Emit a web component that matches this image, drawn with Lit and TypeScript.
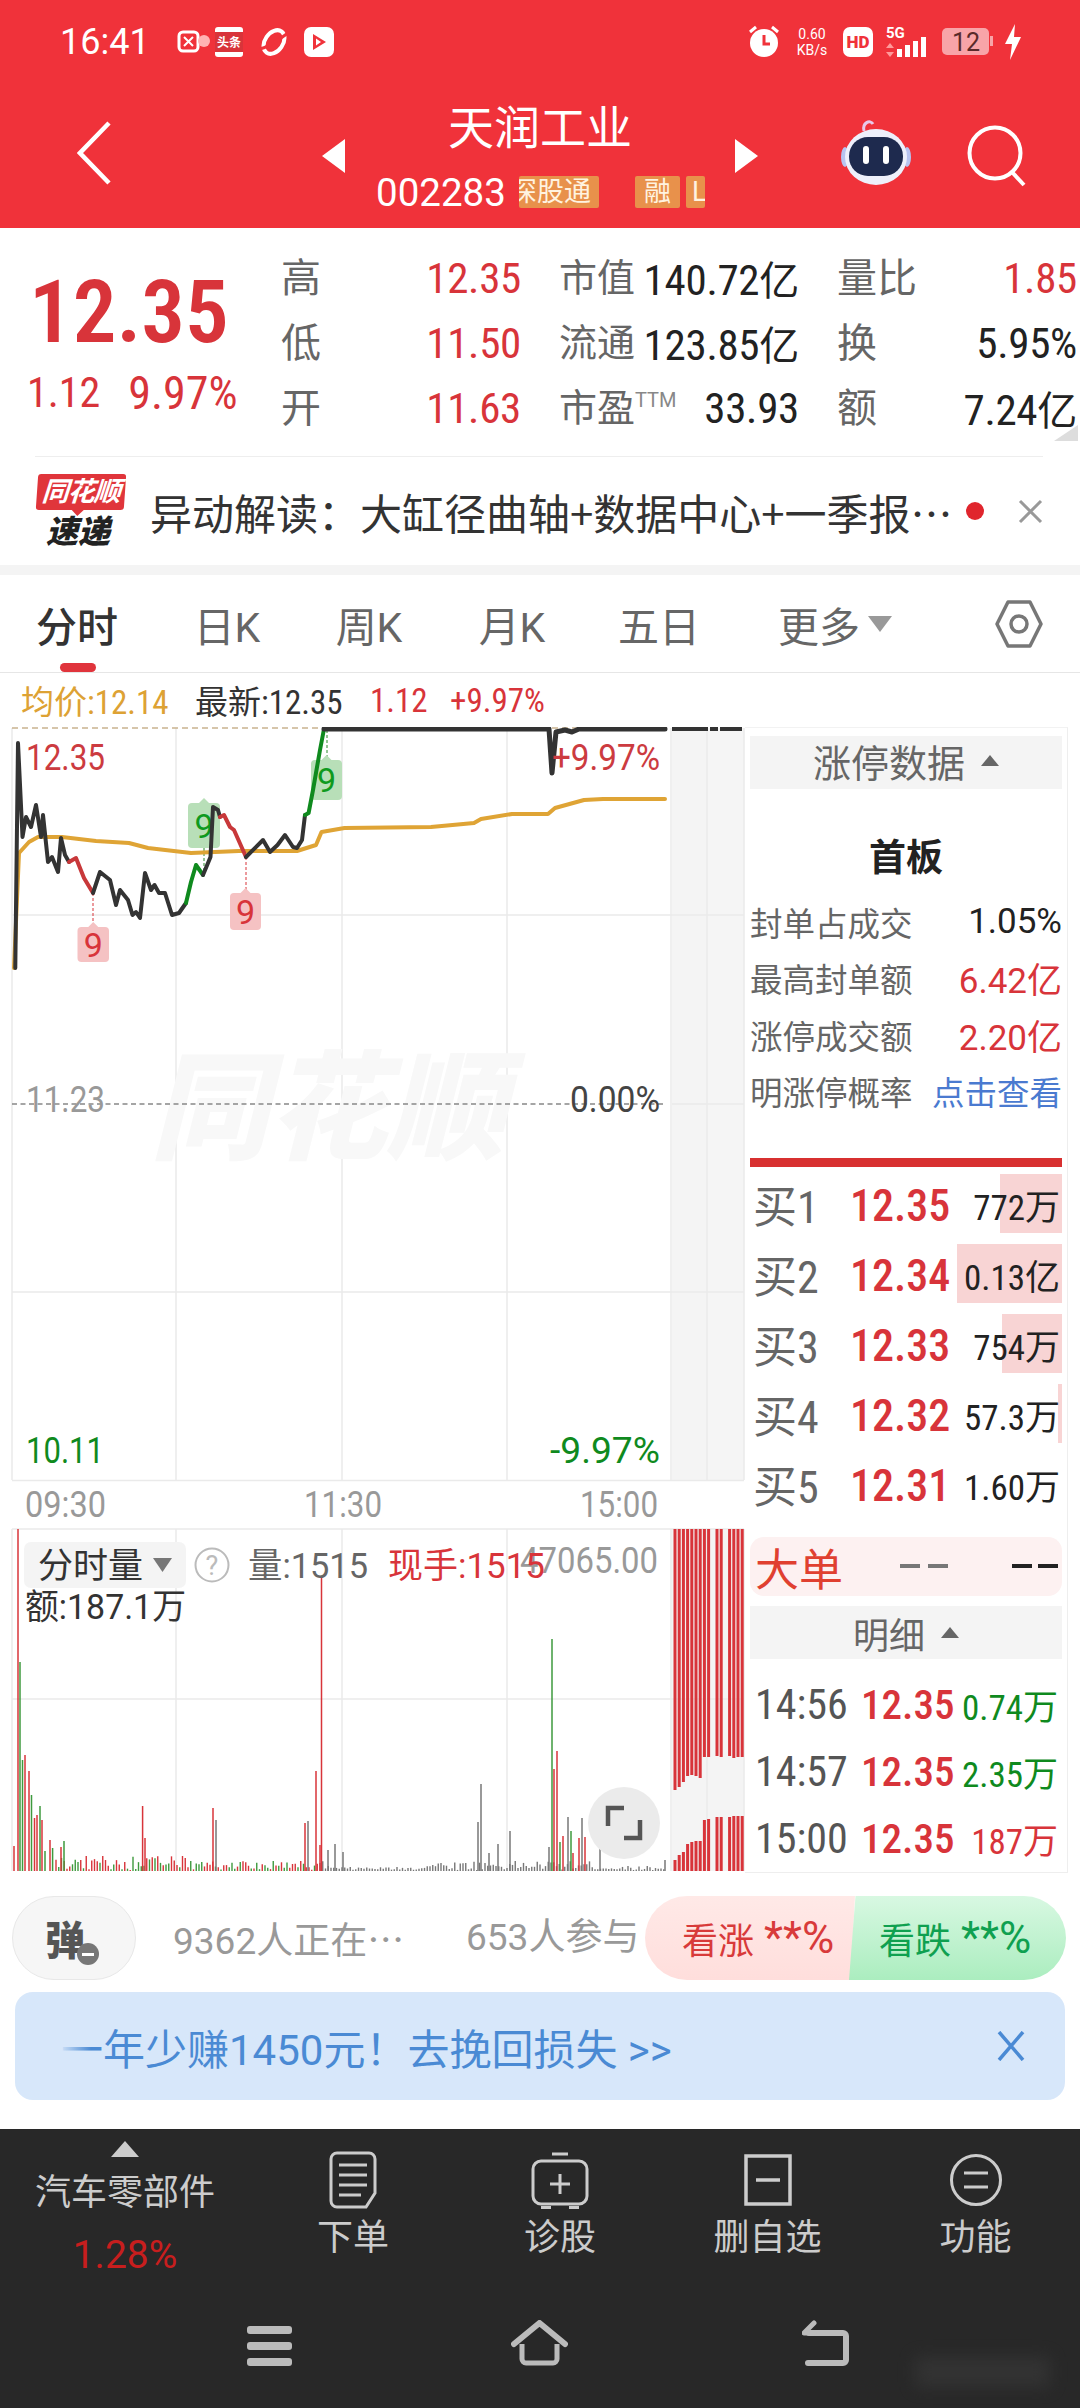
import { LitElement, html, svg, css } from "lit";
import { customElement } from "lit/decorators.js";

const GREEN = "#0F8A1E";

function priceLine(pts: number[][], color: string, w = 4) {
  return svg`<polyline points=${pts.map((p) => p.join(",")).join(" ")} fill="none" stroke=${color} stroke-width=${w} stroke-linejoin="round" stroke-linecap="round"></polyline>`;
}

function label(x: number, y: number, s: string, color: string, len: number, size = 36, anchor = "start") {
  return svg`<text x=${x} y=${y} fill=${color} font-size=${size} text-anchor=${anchor} textLength=${len} lengthAdjust="spacingAndGlyphs" font-family="Roboto, 'Noto Sans CJK SC', sans-serif">${s}</text>`;
}

const bigBars: [number, number, string][] = [
  [14, 1846, "r"], [18, 1529, "r"], [20, 1662, "g"], [22.5, 1760, "g"], [25, 1755, "r"], [29, 1771, "r"], [31.5, 1795, "g"],
  [34.5, 1818, "r"], [37, 1815, "r"], [40, 1806, "g"], [42, 1820, "r"], [45, 1851, "g"], [50, 1840, "r"], [52.6, 1848, "g"],
  [61, 1847, "r"], [64, 1841, "g"], [142.6, 1806, "r"], [145, 1838, "r"], [213, 1808, "r"], [216, 1820, "k"],
  [305, 1823, "r"], [308, 1821, "k"], [316, 1771, "r"], [321.5, 1577, "r"], [320, 1845, "r"], [328, 1850, "k"], [335, 1844, "k"], [343, 1852, "k"],
  [478, 1822, "k"], [481, 1784, "k"], [489, 1853, "k"], [498, 1844, "k"], [510, 1831, "k"],
  [549, 1847, "k"], [552, 1639, "g"], [554, 1769, "r"], [557, 1751, "r"], [560, 1842, "g"], [563, 1836, "r"], [568, 1817, "k"], [571, 1831, "g"], [573, 1853, "r"],
  [579, 1838, "r"], [582, 1818, "k"], [585, 1837, "r"], [600, 1840, "k"], [665, 1860, "k"],
];

function volumeBars() {
  const col: Record<string, string> = { r: "#D8343A", g: "#3E9A3E", k: "#777" };
  let seed = 17;
  const rnd = () => {
    seed = (seed * 1103515245 + 12345) & 0x7fffffff;
    return seed / 0x7fffffff;
  };
  const out: unknown[] = [];
  for (let x = 56; x < 665; x += 2.75) {
    let max = 4;
    if (x < 200) max = 14;
    else if (x < 330) max = 9;
    else if (x < 420) max = 3;
    else if (x < 470) max = 9;
    else if (x < 600) max = 9;
    const h = 1 + rnd() * max;
    const c = x < 320 ? (rnd() > 0.5 ? col.r : col.g) : col.k;
    out.push(svg`<line x1=${x} x2=${x} y1=${1871 - h} y2="1871" stroke=${c} stroke-width="1.4"></line>`);
  }
  for (const [x, top, c] of bigBars) {
    out.push(svg`<line x1=${x} x2=${x} y1=${top} y2="1871" stroke=${col[c]} stroke-width="1.5"></line>`);
  }
  return out;
}

const preTop = [1790, 1787, 1782, 1776, 1775, 1776, 1778, 1757, 1757, 0, 1756, 1757, 0, 1756, 1758, 1757, 1757];
const preBot = [1860, 1855, 1852, 1844, 1842, 1841, 1841, 1820, 1819, 0, 1817, 1817, 0, 1817, 1816, 1816, 1816];
function preBars() {
  return preTop.map((t, i) => {
    if (!t) return svg``;
    const x = 673.5 + i * 4.2;
    return svg`<rect x=${x} y="1529" width="3" height=${t - 1529} fill="#D8343A"></rect><rect x=${x} y=${preBot[i]} width="3" height=${1871 - preBot[i]} fill="#D8343A"></rect>`;
  });
}

function marker(x: number, y: number, w: number, h: number, c: string, bg: string) {
  return svg`<rect x=${x} y=${y} width=${w} height=${h} rx="4" fill=${bg}></rect>
    <path d="M${x + w / 2 - 5} ${y}l5 -5l5 5z" fill=${bg}></path>
    <text x=${x + w / 2} y=${y + h / 2 + 12} fill=${c} font-size="34" text-anchor="middle" font-family="Roboto, sans-serif">9</text>`;
}

@customElement("app-root")
export class AppRoot extends LitElement {
  static styles = css`
    :host { display: block; width: 1080px; height: 2408px; background: #fff; overflow: hidden; font-family: Roboto, "Noto Sans CJK SC", sans-serif; color: #333; }
    .n { font-stretch: 85%; }
    .top { height: 228px; background: #F0323A; color: #fff; }
    .status { height: 84px; display: flex; align-items: center; }
    .time { margin-left: 60px; font-size: 36px; width: 88px; white-space: nowrap; }
    .lefticons { margin-left: 28px; display: flex; align-items: center; }
    .righticons { margin-left: auto; margin-right: 58px; display: flex; align-items: center; }
    .speed { font-size: 14px; line-height: 16px; text-align: center; margin: 0 12px; width: 38px; }
    .nav { height: 144px; display: flex; align-items: center; }
    .back { margin-left: 77px; margin-bottom: 6px; }
    .tl { margin-left: 210px; }
    .mid { width: 390px; height: 144px; }
    .name { margin-top: 18px; height: 52px; line-height: 52px; font-size: 46px; text-align: center; }
    .coderow { margin-top: 22px; height: 32px; display: flex; align-items: center; padding-left: 31px; }
    .code { font-size: 38.5px; width: 143px; white-space: nowrap; }
    .bd { background: #E8914B; height: 32px; line-height: 32px; font-size: 27px; display: flex; overflow: hidden; white-space: nowrap; color: #FFF3E0; border-radius: 2px; }
    .b1 { width: 80px; justify-content: flex-end; padding-right: 8px; box-sizing: border-box; }
    .b2 { width: 45px; margin-left: 36px; justify-content: center; }
    .b3 { width: 19px; margin-left: 6px; padding-left: 6px; box-sizing: border-box; }
    .bot { margin-left: 82px; margin-bottom: 8px; }
    .search { margin-left: 55px; }

    .quote { height: 228px; display: flex; position: relative; box-sizing: border-box; }
    .left { width: 281px; padding-left: 29px; box-sizing: border-box; }
    .price { margin-top: 40px; height: 88px; line-height: 88px; font-size: 87px; font-weight: 600; color: #D8343A; white-space: nowrap; font-stretch: 85%; }
    .sub { margin-top: 14px; margin-left: -2px; display: flex; gap: 28px; line-height: 46px; color: #D8343A; white-space: nowrap; font-stretch: 85%; }
    .s1 { font-size: 42px; }
    .s2 { font-size: 46px; }
    .stats { margin-top: 17px; display: grid; grid-template-columns: 240px 240px 240px; column-gap: 38px; grid-auto-rows: 65px; }
    .cell { display: flex; align-items: center; justify-content: space-between; white-space: nowrap; }
    .lb { font-size: 40px; color: #666; margin-bottom: 6px; }
    .lbs { font-size: 38px; color: #666; margin-bottom: 6px; }
    .ttm { font-size: 20px; vertical-align: 14px; color: #888; }
    .val { font-size: 43px; color: #222; letter-spacing: -0.3px; }
    .val.r { color: #D8343A; }
    .val i { font-style: normal; font-size: 40px; }
    .corner { position: absolute; right: 2px; bottom: 15px; width: 0; height: 0; border-left: 24px solid transparent; border-bottom: 16px solid #DDD; }
    .divider { height: 1px; background: #eee; margin: 0 37px 0 35px; }
    .news { height: 108px; display: flex; align-items: center; }
    .logo { margin-left: 37px; width: 90px; }
    .lg1 { width: 88px; height: 36px; line-height: 36px; background: #E0353B; color: #fff; font-size: 27px; font-weight: 700; font-style: italic; text-align: center; border-radius: 3px; transform: skewX(-4deg); position: relative; white-space: nowrap; letter-spacing: -1px; }
    .lg1::after { content: ""; position: absolute; left: 36px; bottom: -6px; border-left: 6px solid transparent; border-right: 6px solid transparent; border-top: 6px solid #E0353B; }
    .lg2 { margin-top: 5px; margin-left: 9px; font-size: 32px; line-height: 34px; font-weight: 900; font-style: italic; color: #222; white-space: nowrap; }
    .ntext { margin-left: 23px; width: 805px; font-size: 42px; font-family: "Noto Sans CJK SC", sans-serif; white-space: nowrap; color: #333; overflow: hidden; }
    .dot { width: 18px; height: 18px; border-radius: 50%; background: #E0252D; margin-left: 11px; }
    .xx { margin-left: 33px; }
    .band { height: 10px; background: #F4F4F4; }

    .tabs { height: 97px; display: grid; grid-template-columns: 154px 146px 138px 148px 146px 206px 1fr; border-bottom: 1px solid #E6E6E6; position: relative; box-sizing: content-box; }
    .tab { display: flex; align-items: center; justify-content: center; font-size: 41px; color: #666; height: 100px; white-space: nowrap; margin-top: -1px; }
    .tab.on { color: #333; font-weight: 500; }
    .tab.hex { justify-content: flex-start; padding-left: 57px; }
    .more { gap: 8px; }
    .tri { width: 0; height: 0; border-left: 12px solid transparent; border-right: 12px solid transparent; border-top: 16px solid #999; }
    .under { position: absolute; left: 60px; bottom: 0; width: 36px; height: 9px; border-radius: 5px; background: #E0343C; }
    .info { height: 54px; display: flex; align-items: center; font-size: 33px; padding-left: 21px; white-space: nowrap; }
    .gold { color: #DDA234; width: 174px; }
    .latest { color: #333; width: 175px; }
    .ch { color: #D8343A; width: 80px; }
    .pc { color: #D8343A; }

    .main { display: flex; height: 1146px; }
    .chart { width: 745px; height: 1146px; display: block; flex: none; }
    .panel { width: 323px; box-sizing: border-box; padding: 8px 5px 0; border-right: 1px solid #EEE; border-top: 1px solid #F2F2F2; border-bottom: 1px solid #EEE; flex: none; }
    .ph { height: 53px; box-sizing: border-box; padding-bottom: 5px; background: #F4F4F4; display: flex; align-items: center; justify-content: center; gap: 16px; font-size: 38px; color: #666; }
    .up { width: 0; height: 0; border-left: 9px solid transparent; border-right: 9px solid transparent; border-bottom: 11px solid #666; }
    .sb { margin-top: 32px; height: 72px; line-height: 76px; text-align: center; font-size: 37px; font-weight: 700; color: #222; }
    .lim { height: 56.5px; display: flex; align-items: center; justify-content: space-between; font-size: 32.5px; color: #666; white-space: nowrap; }
    .lim b { font-weight: 400; font-size: 35px; color: #222; }
    .lim b.r { color: #D8343A; }
    .lim b.bl { color: #4A7AD0; font-size: 32.5px; }
    .redbar { margin-top: 39px; height: 9px; background: #D83030; margin-bottom: 2px; }
    .buy { height: 70px; display: flex; align-items: center; position: relative; white-space: nowrap; }
    .buy .bl2 { width: 100px; font-size: 44px; color: #666; padding-left: 3px; box-sizing: border-box; }
    .buy .pr { font-size: 44px; color: #D8343A; font-weight: 500; width: 100px; font-stretch: 85%; margin-top: 3px; }
    .buy .vol { margin-left: auto; font-size: 35px; color: #222; position: relative; padding-right: 2px; }
    .fill { position: absolute; right: 0; top: 5px; height: 59px; background: #F8D4D4; }
    .big { margin-top: 18px; height: 59px; border-radius: 14px; background: #FDF1F1; display: flex; align-items: center; padding-left: 5px; position: relative; color: #E04030; font-size: 44px; }
    .dash { position: absolute; top: 27px; height: 4px; width: 20px; }
    .detail-head { margin-top: 10px; height: 53px; background: #F4F4F4; display: flex; align-items: center; justify-content: center; gap: 16px; font-size: 36px; color: #666; }
    .rows { margin-top: 12px; }
    .dr { height: 67px; display: flex; align-items: center; white-space: nowrap; font-size: 42px; }
    .dr .t { width: 111px; color: #555; padding-left: 5px; box-sizing: border-box; }
    .dr .p { color: #D8343A; font-size: 41px; font-weight: 500; }
    .dr .v { margin-left: auto; padding-right: 4px; font-size: 35px; }

    .social { height: 107px; box-sizing: border-box; padding-top: 23px; display: flex; white-space: nowrap; }
    .dan { margin-left: 12px; width: 124px; height: 84px; border-radius: 42px; background: #F6F6F6; border: 1px solid #E8E8E8; box-sizing: border-box; position: relative; display: flex; align-items: center; padding-left: 32px; font-size: 40px; font-weight: 900; color: #555; }
    .dan i { position: absolute; left: 64px; top: 46px; width: 22px; height: 22px; border-radius: 50%; background: #777; display: flex; align-items: center; justify-content: center; }
    .dan i::after { content: ""; width: 12px; height: 3px; background: #fff; }
    .grey { color: #999; font-size: 37px; line-height: 84px; }
    .g1 { margin-left: 37px; width: 293px; }
    .g1 i { font-style: normal; font-family: "Noto Sans CJK SC", sans-serif; }
    .g2 { width: 179px; }
    .vote { height: 84px; display: flex; align-items: center; font-size: 36px; gap: 10px; }
    .vote b { font-weight: 400; font-size: 44px; }
    .vu { width: 210px; background: linear-gradient(#FFE9E7, #FFDEDC); color: #D83A3A; border-radius: 42px 0 0 42px; padding-left: 37px; box-sizing: border-box; clip-path: polygon(0 0, 100% 0, 98% 100%, 0 100%); }
    .vd { width: 217px; margin-left: -6px; background: linear-gradient(#D8F8E2, #ABEDBF); color: #0FA050; border-radius: 0 42px 42px 0; padding-left: 30px; box-sizing: border-box; clip-path: polygon(3% 0, 100% 0, 100% 100%, 0 100%); }
    .ad { margin: 12px 15px 0; height: 108px; border-radius: 18px; background: #D7E7FA; display: flex; align-items: center; color: #4A8AD4; font-size: 42px; padding-left: 46px; white-space: nowrap; position: relative; }
    .ad svg { position: absolute; right: 39px; top: 39px; }
    .fade { position: absolute; left: 30px; top: 0; width: 46px; height: 100%; background: linear-gradient(90deg, #D7E7FA 30%, rgba(215, 231, 250, 0)); }
    .gap { height: 29px; }
    .dark { height: 279px; background: #282828; color: #CCC; position: relative; }
    .menu { height: 191px; display: grid; grid-template-columns: 250px 206px 208px 207px 1fr; box-sizing: border-box; }
    .sector { display: flex; flex-direction: column; align-items: center; font-size: 36px; white-space: nowrap; }
    .ar { margin-top: 12px; width: 0; height: 0; border-left: 14px solid transparent; border-right: 14px solid transparent; border-bottom: 16px solid #CCC; }
    .sn { margin-top: 13px; line-height: 46px; }
    .sp { margin-top: 16px; color: #C81E1E; line-height: 46px; font-size: 39px; }
    .act { display: flex; flex-direction: column; align-items: center; font-size: 36px; white-space: nowrap; padding-top: 22px; }
    .act svg { height: 58px; display: block; }
    .act span { margin-top: 4px; line-height: 50px; }
    .sys { height: 88px; display: flex; align-items: flex-start; padding-left: 247px; }
    .home { margin-left: 219px; }
    .ret { margin-left: 234px; }
    .wm { position: absolute; left: 915px; top: 228px; width: 135px; height: 30px; background: #3A3A3A; filter: blur(8px); opacity: .6; }
  `;

  render() {
    const black1 = [[15.3,968],[18,743],[22.5,837],[26,817],[31,827],[36,805],[41,837],[43,815],[48,862],[52,857],[58,872],[61,838],[65,855],[69,862]];
    const red1 = [[69,862],[76,858],[84,878],[93,893]];
    const black2 = [[93,893],[100,872],[110,880],[116,905],[120,890],[128,900],[132.5,915],[136,912],[140,918],[145,873],[151,890],[154.5,885],[159,893],[165,893],[172,915],[179,913],[186,903]];
    const green1 = [[186,903],[191,882],[196,865],[203,875]];
    const black3 = [[203,875],[210.5,857],[213,807],[218,810],[220,817]];
    const red2 = [[220,817],[224,815],[230,827],[234,830],[246,857]];
    const black4 = [[246,857],[263,840],[270,852],[277.5,845],[285,835],[293,847],[297,848],[302,840],[305,815]];
    const green2 = [[305,815],[308.6,813],[313,790],[320,750],[324,729]];
    const black5 = [[324,729],[549,729],[552,773],[556,732],[565,730],[572,732],[579,729],[665,729]];
    const gold = [[14,968],[19,853],[29,842],[38,837],[62,837],[96,841],[129,843],[148,848],[191,853],[239,851],[297,851],[316,845],[321.5,832],[344.5,828],[431,827],[474,823],[481,819],[512,814],[548,814],[555,808],[584,800],[603,799],[665,799]];
    return html`
      <div class="top">
        <div class="status">
          <div class="time">16:41</div>
          <div class="lefticons">
            <svg width="160" height="34" viewBox="0 0 160 34" fill="none">
              <rect x="3" y="7" width="19" height="19" rx="4" stroke="#fff" stroke-width="3"/><path d="M8 12l9 9M17 12L8 21" stroke="#fff" stroke-width="2"/>
              <circle cx="28" cy="16" r="6" fill="#FFB3B3"/>
              <rect x="39" y="2" width="28" height="30" rx="3" fill="#fff"/><rect x="39" y="7" width="28" height="20" fill="#D8343A"/>
              <text x="53" y="22" fill="#fff" font-size="12" text-anchor="middle" font-family="Noto Sans CJK SC, sans-serif" font-weight="700">头条</text>
              <ellipse cx="98" cy="17" rx="9" ry="13" transform="rotate(35 98 17)" stroke="#fff" stroke-width="4"/>
              <path d="M84 24C92 22 104 14 112 8" stroke="#F0323A" stroke-width="3"/>
              <rect x="128" y="2" width="30" height="30" rx="7" fill="#fff"/><path d="M137 9l13 8l-13 8z" fill="#F0323A"/><path d="M140 13.500l5 3.500l-5 3.500z" fill="#fff"/>
            </svg>
          </div>
          <div class="righticons">
            <svg width="34" height="36" viewBox="0 0 34 36"><circle cx="17" cy="19" r="14" fill="#fff"/><path d="M17 11v9h6" stroke="#F0323A" stroke-width="3" fill="none"/><path d="M3 8l6-5M31 8l-6-5" stroke="#fff" stroke-width="3"/></svg>
            <div class="speed">0.60<br />KB/s</div>
            <svg width="30" height="30" viewBox="0 0 30 30"><rect width="30" height="30" rx="7" fill="#fff"/><text x="15" y="21" text-anchor="middle" font-size="17" font-weight="900" fill="#F0323A" font-family="Roboto, sans-serif">HD</text></svg>
            <svg style="margin-left:12px" width="46" height="34" viewBox="0 0 46 34"><text x="1" y="13" font-size="15" font-weight="700" fill="#fff" font-family="Roboto, sans-serif">5G</text><path d="M5 18l4 5H1z" fill="#FF9A9A"/><path d="M5 32l-4-5h8z" fill="#FF9A9A"/><rect x="12" y="24" width="5" height="8" fill="#fff"/><rect x="20" y="20" width="5" height="12" fill="#fff"/><rect x="28" y="16" width="5" height="16" fill="#fff"/><rect x="36" y="12" width="5" height="20" fill="#fff"/></svg>
            <svg style="margin-left:10px" width="54" height="34" viewBox="0 0 54 34"><rect x="1" y="3" width="47" height="27" rx="5" fill="#F8A4A8"/><rect x="49" y="11" width="3" height="10" fill="#F8A4A8"/><text x="25" y="26" text-anchor="middle" font-size="25" fill="#5A2A2A" font-family="Roboto, sans-serif">12</text></svg>
            <svg style="margin-left:9px" width="18" height="38" viewBox="0 0 18 38"><path d="M11 1L1 21h7l-2 16L17 14h-7z" fill="#fff"/></svg>
          </div>
        </div>
        <div class="nav">
          <svg class="back" width="35" height="64" viewBox="0 0 35 64" fill="none"><path d="M32 2L3 32l29 30" stroke="#fff" stroke-width="4.500"/></svg>
          <svg class="tl" width="23" height="34" viewBox="0 0 23 34"><path d="M23 0v34L0 17z" fill="#fff"/></svg>
          <div class="mid">
            <div class="name">天润工业</div>
            <div class="coderow">
              <div class="code">002283</div>
              <div class="bd b1">深股通</div>
              <div class="bd b2">融</div>
              <div class="bd b3">L</div>
            </div>
          </div>
          <svg width="23" height="34" viewBox="0 0 23 34"><path d="M0 0v34l23-17z" fill="#fff"/></svg>
          <svg class="bot" width="72" height="66" viewBox="0 0 72 66">
            <path d="M24 12c-2-8 6-12 9-7" fill="none" stroke="#E8C8E8" stroke-width="3"/>
            <ellipse cx="5" cy="38" rx="4" ry="10" fill="#B8C4F0"/><ellipse cx="67" cy="38" rx="4" ry="10" fill="#B8C4F0"/>
            <ellipse cx="36" cy="38" rx="31" ry="28" fill="#EEF0FB"/>
            <rect x="9" y="18" width="54" height="39" rx="19" fill="#1E2A4E"/>
            <rect x="23" y="27" width="6" height="18" rx="3" fill="#fff"/><rect x="43" y="27" width="6" height="18" rx="3" fill="#fff"/>
          </svg>
          <svg class="search" width="60" height="62" viewBox="0 0 60 62" fill="none"><circle cx="28" cy="28" r="25.500" stroke="#fff" stroke-width="4"/><path d="M44 46l13 14" stroke="#fff" stroke-width="4"/></svg>
        </div>
      </div>

      <div class="quote">
        <div class="left">
          <div class="price">12.35</div>
          <div class="sub"><span class="s1">1.12</span><span class="s2">9.97%</span></div>
        </div>
        <div class="stats">
          <div class="cell"><span class="lb">高</span><span class="val r n">12.35</span></div>
          <div class="cell"><span class="lbs">市值</span><span class="val n">140.72<i>亿</i></span></div>
          <div class="cell"><span class="lb">量比</span><span class="val r n">1.85</span></div>
          <div class="cell"><span class="lb">低</span><span class="val r n">11.50</span></div>
          <div class="cell"><span class="lbs">流通</span><span class="val n">123.85<i>亿</i></span></div>
          <div class="cell"><span class="lb">换</span><span class="val n">5.95%</span></div>
          <div class="cell"><span class="lb">开</span><span class="val r n">11.63</span></div>
          <div class="cell"><span class="lbs">市盈<span class="ttm">TTM</span></span><span class="val n">33.93</span></div>
          <div class="cell"><span class="lb">额</span><span class="val n">7.24<i>亿</i></span></div>
        </div>
        <div class="corner"></div>
      </div>
      <div class="divider"></div>
      <div class="news">
        <div class="logo">
          <div class="lg1">同花顺</div>
          <div class="lg2">速递</div>
        </div>
        <div class="ntext">异动解读：大缸径曲轴+数据中心+一季报…</div>
        <div class="dot"></div>
        <svg class="xx" width="27" height="27" viewBox="0 0 27 27" fill="none"><path d="M3 3l21 21M24 3L3 24" stroke="#999" stroke-width="3"/></svg>
      </div>
      <div class="band"></div>

      <div class="tabs">
        <div class="tab on">分时</div>
        <div class="tab">日K</div>
        <div class="tab">周K</div>
        <div class="tab">月K</div>
        <div class="tab">五日</div>
        <div class="tab more">更多<span class="tri"></span></div>
        <div class="tab hex">
          <svg width="48" height="50" viewBox="0 0 48 50" fill="none"><path d="M13 3h22l11 22l-11 22H13L2 25z" stroke="#777" stroke-width="3.500" stroke-linejoin="round"/><circle cx="24" cy="25" r="8" stroke="#777" stroke-width="3.500"/></svg>
        </div>
        <div class="under"></div>
      </div>
      <div class="info">
        <span class="gold n">均价:12.14</span>
        <span class="latest n">最新:12.35</span>
        <span class="ch n">1.12</span>
        <span class="pc n">+9.97%</span>
      </div>

      <div class="main">
        <svg class="chart" viewBox="0 727 745 1146">
          <rect x="672" y="728" width="36" height="752" fill="#F4F4F4"/>
          <rect x="708" y="728" width="36" height="752" fill="#F5F5F5"/>
          <rect x="672" y="1529" width="72" height="342" fill="#F4F4F4"/>
          <g stroke="#EAEAEA" stroke-width="1.500">
            <path d="M12 728V1480M176 728V1480M342 728V1480M507 728V1480M671 728V1480M707 728V1480M744 728V1480"/>
            <path d="M12 915H744M12 1292H744M12 1480.500H744"/>
            <path d="M672 1104H744"/>
            <path d="M12 1529V1871M176 1529V1871M342 1529V1871M507 1529V1871M671 1529V1871M707 1529V1871M744 1529V1871"/>
            <path d="M12 1529H744M12 1699H744"/>
          </g>
          <text x="150" y="1150" font-size="118" font-weight="900" font-style="italic" fill="#F8F8F8" textLength="355" lengthAdjust="spacingAndGlyphs" font-family="Noto Sans CJK SC, sans-serif">同花顺</text>
          <path d="M12 728H665" stroke="#C9B28E" stroke-width="1.500" stroke-dasharray="6 4"/>
          <path d="M672 728.500H742" stroke="#333" stroke-width="5" stroke-dasharray="36 2 8 2 22"/>
          <path d="M12 1104H665" stroke="#888" stroke-width="1.500" stroke-dasharray="5 3.500"/>
          <path d="M93 893V927M246 857V893" stroke="#D8343A" stroke-width="1" stroke-dasharray="3 2"/>
          <path d="M204 848V875M327 730V760" stroke="#2A8A2A" stroke-width="1" stroke-dasharray="3 2"/>
          ${marker(77.5, 927, 31.5, 35, "#D8343A", "#F5C2C3")}
          ${marker(230, 893, 31, 37, "#D8343A", "#F5C2C3")}
          ${marker(188, 803, 32, 45, "#0F9A1E", "#B8DFB8")}
          ${marker(311, 760, 31, 40, "#0F9A1E", "#B8DFB8")}
          ${priceLine(gold, "#DFA435", 4)}
          ${priceLine(black1, "#333")}
          ${priceLine(red1, "#C8383A")}
          ${priceLine(black2, "#333")}
          ${priceLine(green1, "#0F8A1E")}
          ${priceLine(black3, "#333")}
          ${priceLine(red2, "#C8383A")}
          ${priceLine(black4, "#333")}
          ${priceLine(green2, "#0F8A1E")}
          ${priceLine(black5, "#333", 5)}
          ${label(26, 770, "12.35", "#CC3B40", 79)}
          ${label(660, 770, "+9.97%", "#CC3B40", 108, 36, "end")}
          ${label(26, 1112, "11.23", "#999", 79)}
          ${label(660, 1112, "0.00%", "#444", 90, 36, "end")}
          ${label(26, 1463, "10.11", GREEN, 78)}
          ${label(660, 1463, "-9.97%", GREEN, 110, 36, "end")}
          ${label(25, 1517, "09:30", "#999", 81)}
          ${label(304, 1517, "11:30", "#999", 78)}
          ${label(580, 1517, "15:00", "#999", 78)}
          ${volumeBars()}
          ${preBars()}
          <rect x="24" y="1542" width="162" height="46" rx="7" fill="#F4F4F4"/>
          ${label(38, 1578, "分时量", "#333", 105, 35)}
          <path d="M153 1558h19l-9.500 14z" fill="#777"/>
          <circle cx="212" cy="1565" r="16.500" fill="#fff" stroke="#BBB" stroke-width="2"/>
          <text x="212" y="1575" text-anchor="middle" font-size="27" fill="#BBB" font-family="Roboto, sans-serif">?</text>
          ${label(248, 1578, "量:1515", "#666", 120, 35)}
          ${label(520, 1573, "47065.00", "#999", 138, 36)}
          ${label(388, 1578, "现手:1515", "#D8343A", 157, 35)}
          ${label(25, 1619, "额:187.1万", "#333", 161, 35)}
          <circle cx="624" cy="1823" r="36" fill="#EBEBEB"/>
          <path d="M608 1826v-18h16M640 1820v18h-16" fill="none" stroke="#555" stroke-width="4.500"/>
        </svg>
        <div class="panel">
          <div class="ph">涨停数据<span class="up"></span></div>
          <div class="sb">首板</div>
          <div class="lim"><span>封单占成交</span><b>1.05%</b></div>
          <div class="lim"><span>最高封单额</span><b class="r">6.42亿</b></div>
          <div class="lim"><span>涨停成交额</span><b class="r">2.20亿</b></div>
          <div class="lim"><span>明涨停概率</span><b class="bl">点击查看</b></div>
          <div class="redbar"></div>
          ${[["买1","12.35","772万",62],["买2","12.34","0.13亿",105],["买3","12.33","754万",60],["买4","12.32","57.3万",4],["买5","12.31","1.60万",0]].map(
            ([a, b, c, w]) => html`<div class="buy"><div class="fill" style="width:${w}px"></div><span class="bl2 n">${a}</span><span class="pr">${b}</span><span class="vol n">${c}</span></div>`
          )}
          <div class="big">大单
            <span class="dash" style="left:150px;background:#777"></span><span class="dash" style="left:178px;background:#777"></span>
            <span class="dash" style="left:262px;background:#222"></span><span class="dash" style="left:288px;background:#222"></span>
          </div>
          <div class="detail-head">明细<span class="up"></span></div>
          <div class="rows">
            ${[["14:56","0.74万",GREEN],["14:57","2.35万",GREEN],["15:00","187万","#D8343A"]].map(
              ([t, v, c]) => html`<div class="dr"><span class="t n">${t}</span><span class="p n">12.35</span><span class="v n" style="color:${c}">${v}</span></div>`
            )}
          </div>
        </div>
      </div>

      <div class="social">
        <div class="dan">弹<i></i></div>
        <div class="grey g1">9362人正在<i>…</i></div>
        <div class="grey g2">653人参与</div>
        <div class="vote vu">看涨<b>**%</b></div>
        <div class="vote vd">看跌<b>**%</b></div>
      </div>
      <div class="ad">
        一年少赚1450元！去挽回损失 &gt;&gt;
        <div class="fade"></div>
        <svg width="30" height="30" viewBox="0 0 30 30" fill="none"><path d="M3 1l24 28M27 1L3 29" stroke="#4A8AD4" stroke-width="3.500"/></svg>
      </div>
      <div class="gap"></div>

      <div class="dark">
        <div class="menu">
          <div class="sector">
            <div class="ar"></div>
            <div class="sn">汽车零部件</div>
            <div class="sp">1.28%</div>
          </div>
          <div class="act">
            <svg width="48" height="58" viewBox="0 0 48 58" fill="none" stroke="#CCC" stroke-width="3"><path d="M8 2h32a6 6 0 0 1 6 6v34l-9 14H8a6 6 0 0 1-6-6V8a6 6 0 0 1 6-6z"/><path d="M10 14h28M10 24h28M10 34h28M10 44h22" /></svg>
            <span>下单</span>
          </div>
          <div class="act">
            <svg width="58" height="58" viewBox="0 0 58 58" fill="none" stroke="#CCC" stroke-width="3"><path d="M21 3h16"/><rect x="2" y="10" width="54" height="43" rx="8"/><path d="M29 23v20M19 33h20"/><path d="M10 57h10M38 57h10" stroke-width="4"/></svg>
            <span>诊股</span>
          </div>
          <div class="act">
            <svg width="48" height="58" viewBox="0 0 48 58" fill="none" stroke="#CCC" stroke-width="3.500"><rect x="2" y="5" width="44" height="48"/><path d="M12 29h24"/></svg>
            <span>删自选</span>
          </div>
          <div class="act">
            <svg width="52" height="58" viewBox="0 0 52 58" fill="none" stroke="#CCC" stroke-width="3"><circle cx="26" cy="29" r="24.500"/><path d="M14 22h24M14 36h24"/></svg>
            <span>功能</span>
          </div>
        </div>
        <div class="sys">
          <svg width="45" height="46" viewBox="0 0 45 46" fill="#BBB"><rect y="6" width="45" height="8" rx="3"/><rect y="22" width="45" height="8" rx="3"/><rect y="38" width="45" height="8" rx="3"/></svg>
          <svg class="home" width="57" height="46" viewBox="0 0 57 46" fill="none" stroke="#BBB" stroke-width="6" stroke-linecap="round" stroke-linejoin="round"><path d="M3 24L28.500 3L54 24"/><path d="M11 24v15a4 4 0 0 0 4 4h27a4 4 0 0 0 4-4V24" stroke-width="5" stroke-linecap="butt"/></svg>
          <svg class="ret" width="47" height="46" viewBox="0 0 47 46" fill="none" stroke="#BBB" stroke-width="6" stroke-linecap="round" stroke-linejoin="round"><path d="M7 13h34a3 3 0 0 1 3 3v24a3 3 0 0 1-3 3H6"/><path d="M12 3L2 13l10 0" stroke-width="5"/></svg>
        </div>
        <div class="wm"></div>
      </div>
    `;
  }
}
